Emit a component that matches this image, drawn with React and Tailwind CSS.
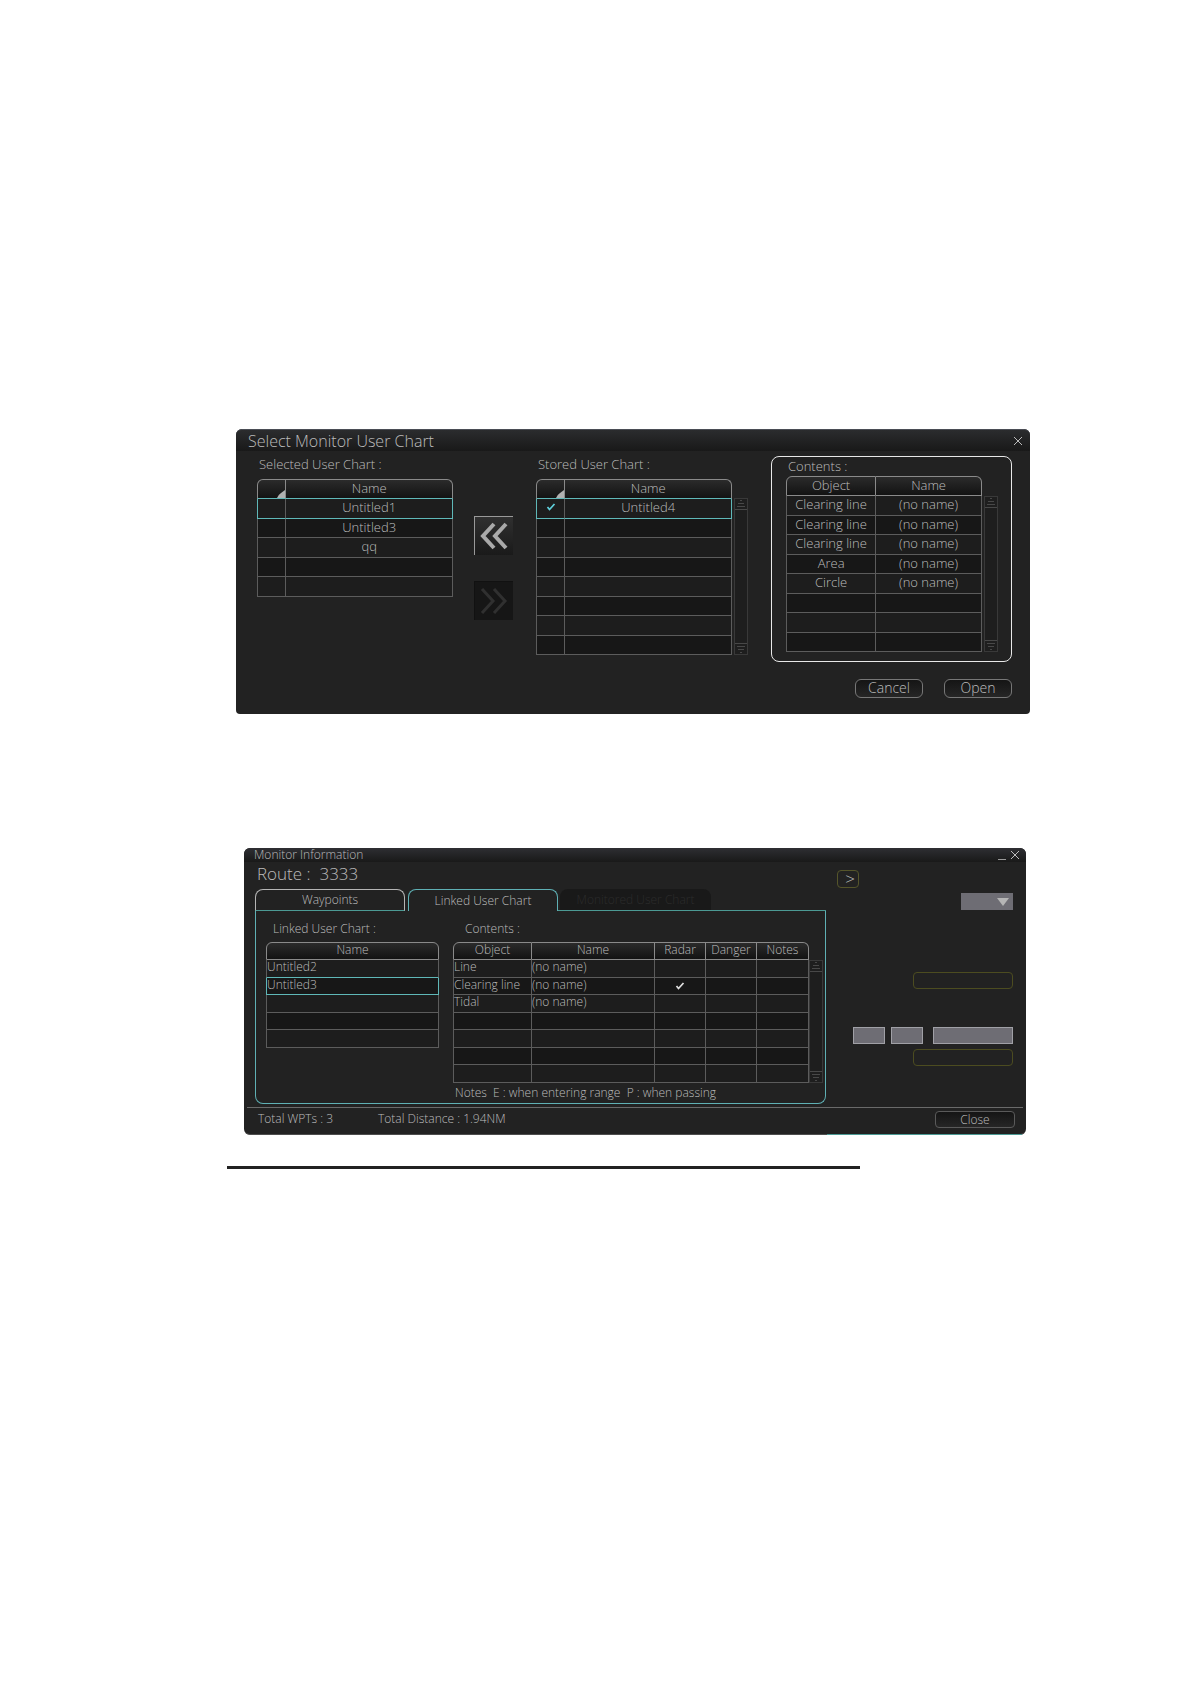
import React from "react";
import clsx from "clsx";

const selectedCharts = [
  { cells: ["", "Untitled1"], selected: true },
  { cells: ["", "Untitled3"] },
  { cells: ["", "qq"] },
  { cells: ["", ""] },
  { cells: ["", ""] },
];

const storedCharts = [
  { cells: [<Check className="mx-auto mt-1 text-[#5fd0dc]" />, "Untitled4"], selected: true },
  ...Array.from({ length: 7 }, () => ({ cells: ["", ""] })),
];

const storedContents = [
  { cells: ["Clearing line", "(no name)"] },
  { cells: ["Clearing line", "(no name)"] },
  { cells: ["Clearing line", "(no name)"] },
  { cells: ["Area", "(no name)"] },
  { cells: ["Circle", "(no name)"] },
  ...Array.from({ length: 3 }, () => ({ cells: ["", ""] })),
];

const linkedCharts = [
  { cells: ["Untitled2"] },
  { cells: ["Untitled3"], selected: true },
  ...Array.from({ length: 3 }, () => ({ cells: [""] })),
];

const linkedContents = [
  { cells: ["Line", "(no name)", "", "", ""] },
  { cells: ["Clearing line", "(no name)", <Check className="mx-auto mt-1 text-[#e0e0e0]" />, "", ""] },
  { cells: ["Tidal", "(no name)", "", "", ""] },
  ...Array.from({ length: 4 }, () => ({ cells: ["", "", "", "", ""] })),
];

function Check({ className }) {
  return (
    <svg viewBox="0 0 10 9" className={clsx("h-[9px] w-[10px]", className)}>
      <path d="M1.5 4 L3.5 6.5 L8.5 1" fill="none" stroke="currentColor" strokeWidth="1.7" />
    </svg>
  );
}

function CloseIcon({ className }) {
  return (
    <svg viewBox="0 0 10 10" className={clsx("h-[10px] w-[10px]", className)}>
      <path d="M1 1 L9 9 M9 1 L1 9" stroke="currentColor" strokeWidth="1" />
    </svg>
  );
}

function SortCorner() {
  return (
    <svg viewBox="0 0 8 8" className="ml-auto h-2 w-2">
      <path d="M8 0 V8 H0 Q1 5 4 3 Z" fill="#b0b0b0" />
    </svg>
  );
}

function ScrollEnd({ down }) {
  return (
    <svg viewBox="0 0 12 11" className={clsx("h-[11px] w-full", down && "rotate-180")}>
      <path d="M5 1.5 H7 M3 4.5 H9 M2 7.5 H10 M0 10.5 H12" stroke="#484848" strokeWidth="1" />
    </svg>
  );
}

function ScrollBar({ className }) {
  return (
    <div className={clsx("flex w-[14px] flex-col justify-between border border-[#393939] bg-[#1e1e1e]", className)}>
      <ScrollEnd />
      <ScrollEnd down />
    </div>
  );
}

function DataTable({ label, widths, headers, rows, dense, left }) {
  return (
    <table aria-label={label} className="w-full table-fixed border-separate border-spacing-0">
      <colgroup>
        {widths.map((width, i) => (
          <col key={i} style={{ width }} />
        ))}
      </colgroup>
      <thead>
        <tr className={dense ? "h-[18px]" : "h-[20px]"}>
          {headers.map((header, i) => (
            <th
              key={i}
              className={clsx(
                "border-t border-r border-b border-t-[#8a8a8a] border-r-[#8a8a8a] bg-linear-to-b from-[#2b2b2b] to-[#131313] p-0 font-light",
                dense ? "leading-[14px]" : "leading-4",
                i === 0 && "rounded-tl-md border-l border-l-[#8a8a8a]",
                i === headers.length - 1 && "rounded-tr-md",
                header === "" ? "align-bottom" : "align-top",
                rows[0].selected ? "border-b-[#5fb8b8]" : "border-b-[#8a8a8a]"
              )}
            >
              {header === "" ? <SortCorner /> : header}
            </th>
          ))}
        </tr>
      </thead>
      <tbody>
        {rows.map((row, r) => (
          <tr
            key={r}
            className={clsx(
              "odd:bg-[#1d1d1d] even:bg-[#171717]",
              dense ? "odd:h-[18px] even:h-[17px]" : "odd:h-[20px] even:h-[19px]"
            )}
          >
            {row.cells.map((cell, i) => (
              <td
                key={i}
                className={clsx(
                  "border-r border-b p-0 align-top whitespace-nowrap",
                  dense ? "leading-[14px]" : "leading-4",
                  left ? "text-left" : "text-center",
                  i === 0 && "border-l",
                  row.selected ? "border-[#5fb8b8]" : "border-[#5c5c5c]",
                  rows[r + 1]?.selected && "border-b-[#5fb8b8]",
                  row.selected && i < row.cells.length - 1 && "border-r-[#5c5c5c]"
                )}
              >
                {cell}
              </td>
            ))}
          </tr>
        ))}
      </tbody>
    </table>
  );
}

function SelectChartDialog() {
  return (
    <section className="ml-[9px] rounded-t-md rounded-b bg-[#222222] pb-4 text-[13px] text-[#bcbcbc]">
      <header className="flex h-[22px] items-center justify-between rounded-t-md border-t border-[#4a4d55] bg-linear-to-b from-[#2b2c2e] to-[#191919] pr-[7px] pl-3">
        <h2 className="text-[16px] leading-5">Select Monitor User Chart</h2>
        <button aria-label="Close dialog">
          <CloseIcon />
        </button>
      </header>

      <div className="flex items-start pr-[18px] pl-[21px]">
        <div className="w-[196px] pt-[3px]">
          <h3 className="mb-[5px] pl-[2px] leading-5">Selected User Chart :</h3>
          <DataTable label="Selected User Chart" widths={["15%", "85%"]} headers={["", "Name"]} rows={selectedCharts} />
        </div>

        {/* Move buttons */}
        <div className="ml-[21px] flex flex-col gap-[26px] pt-[65px]">
          <button
            aria-label="Move to selected"
            className="flex h-[39px] w-[39px] items-center justify-center border-t border-l border-[#999999] bg-linear-to-b from-[#303030] to-[#1a1a1a]"
          >
            <svg viewBox="0 0 28 28" className="h-7 w-7">
              <path d="M14 2 L3 14 L14 26 M26 2 L15 14 L26 26" fill="none" stroke="#a9a9a9" strokeWidth="4" />
            </svg>
          </button>
          <button
            aria-label="Move to stored"
            disabled
            className="flex h-[39px] w-[39px] items-center justify-center border-t border-l border-[#111111] bg-[#161616]"
          >
            <svg viewBox="0 0 28 28" className="h-7 w-7">
              <path d="M2 2 L13 14 L2 26 M14 2 L25 14 L14 26" fill="none" stroke="#303030" strokeWidth="3" />
            </svg>
          </button>
        </div>

        <div className="ml-[23px] flex">
          <div className="w-[196px] pt-[3px]">
            <h3 className="mb-[5px] pl-[2px] leading-5">Stored User Chart :</h3>
            <DataTable label="Stored User Chart" widths={["15%", "85%"]} headers={["", "Name"]} rows={storedCharts} />
          </div>
          <ScrollBar className="mt-[47px] ml-[2px]" />
        </div>

        <div className="mt-[5px] ml-auto flex w-[241px] rounded-lg border border-[#e8e8e8] pb-[9px] pl-[14px]">
          <div className="w-[196px]">
            <h3 className="mb-px pl-[2px] leading-[18px]">Contents :</h3>
            <DataTable label="Contents" widths={["46%", "54%"]} headers={["Object", "Name"]} rows={storedContents} />
          </div>
          <ScrollBar className="mt-[39px] ml-[2px]" />
        </div>
      </div>

      <div className="mt-[17px] flex justify-end gap-[21px] pr-[18px] text-[14px]">
        <button className="flex h-[19px] w-[68px] justify-center rounded-md border border-[#777777] bg-linear-to-b from-[#151515] to-[#262626] leading-4">
          Cancel
        </button>
        <button className="flex h-[19px] w-[68px] justify-center rounded-md border border-[#777777] bg-linear-to-b from-[#151515] to-[#262626] leading-4">
          Open
        </button>
      </div>
    </section>
  );
}

function MonitorDialog() {
  return (
    <section className="relative mt-[134px] mr-1 ml-[17px] rounded-md border-b border-[#4d4d4d] bg-[#222222] pb-[6px] text-[12px] text-[#bcbcbc]">
      <header className="flex h-[14px] items-center justify-between rounded-t-md bg-linear-to-b from-[#2e2f33] to-[#191919] pr-[6px] pl-[10px]">
        <h2 className="leading-[18px]">Monitor Information</h2>
        <div className="flex items-end gap-1">
          <button aria-label="Minimize" className="h-px w-2 bg-[#999999]" />
          <button aria-label="Close window">
            <CloseIcon className="block" />
          </button>
        </div>
      </header>
      <span className="absolute right-1 -bottom-px h-px w-1/4 bg-[#4c9a94]" />

      <div className="flex justify-between pr-[13px] pl-[11px]">
        <div className="w-[571px]">
          <h3 className="pb-[3px] pl-[2px] text-[17px] leading-6 whitespace-pre">Route :  3333</h3>

          {/* Tabs */}
          <div role="tablist" className="flex h-[22px]">
            <button
              role="tab"
              aria-selected="false"
              className="mr-[3px] w-[150px] rounded-t-lg border border-[#b5b5b5] border-b-[#4c9a94]"
            >
              Waypoints
            </button>
            <button
              role="tab"
              aria-selected="true"
              className="w-[150px] rounded-t-lg border border-b-0 border-[#5fb0b4] leading-4"
            >
              Linked User Chart
            </button>
            <div className="flex-1 border-b border-[#4c9a94] pl-[2px]">
              <button
                role="tab"
                aria-selected="false"
                disabled
                className="h-full w-[151px] rounded-t-lg bg-[#191919] text-[#2c2c2c]"
              >
                Monitored User Chart
              </button>
            </div>
          </div>

          <div role="tabpanel" className="flex rounded-b-lg border border-t-0 border-[#5fb0b4] pl-[10px]">
            <div className="w-[173px] pt-2">
              <h4 className="mb-[3px] pl-[7px] leading-5">Linked User Chart :</h4>
              <DataTable label="Linked User Chart" widths={["100%"]} headers={["Name"]} rows={linkedCharts} dense left />
            </div>
            <div className="ml-[14px] w-[356px] pt-2">
              <h4 className="mb-[3px] pl-[12px] leading-5">Contents :</h4>
              <DataTable
                label="Linked contents"
                widths={["79px", "123px", "51px", "51px", "52px"]}
                headers={["Object", "Name", "Radar", "Danger", "Notes"]}
                rows={linkedContents}
                dense
                left
              />
              <p className="pl-[2px] leading-5 whitespace-pre">Notes  E : when entering range  P : when passing</p>
            </div>
            <ScrollBar className="mt-[49px] mb-5" />
          </div>
        </div>

        {/* Side controls */}
        <div className="flex w-[176px] flex-col items-end pt-2">
          <button
            aria-label="Expand"
            className="h-[18px] w-[22px] self-start rounded border border-[#55552a] pl-1 text-[17px] leading-4"
          >
            &gt;
          </button>
          <div className="relative mt-[5px]">
            <select aria-label="Mode" className="block h-[17px] w-[52px] appearance-none bg-[#6e6d74]" />
            <svg viewBox="0 0 12 8" className="pointer-events-none absolute top-[5px] right-1 h-2 w-3">
              <path d="M0 0 H12 L6 8 Z" fill="#b5b5b5" />
            </svg>
          </div>
          <input aria-label="Safety value" className="mt-[62px] h-[17px] w-[100px] rounded border border-[#4c4c20]" />
          <div className="mt-[38px] flex w-full justify-end">
            <input aria-label="Hour" className="h-[17px] w-8 border border-[#a0a0a6] bg-[#6e6d74]" />
            <input aria-label="Minute" className="ml-[6px] h-[17px] w-8 border border-[#a0a0a6] bg-[#6e6d74]" />
            <input aria-label="Date" className="ml-[10px] h-[17px] w-20 border border-[#a0a0a6] bg-[#6e6d74]" />
          </div>
          <input aria-label="Result" className="mt-[5px] h-[17px] w-[100px] rounded border border-[#4c4c20]" />
        </div>
      </div>

      <footer className="mx-[3px] mt-[3px] flex items-start border-t border-[#6a6a6a] pt-[3px] pr-2 pl-[11px]">
        <p className="w-[120px] leading-4">Total WPTs : 3</p>
        <p className="leading-4">Total Distance : 1.94NM</p>
        <button className="ml-auto h-[17px] w-20 rounded border border-[#5a5a5a] bg-linear-to-b from-[#151515] to-[#262626] leading-[14px]">
          Close
        </button>
      </footer>
    </section>
  );
}

export default function App() {
  return (
    <main className="min-h-screen bg-white pt-[429px] pr-[160px] pl-[227px] font-['Open_Sans',sans-serif] font-light">
      <SelectChartDialog />
      <MonitorDialog />
      <hr className="mt-[31px] mr-[170px] border-t-[3px] border-[#222222]" />
    </main>
  );
}
